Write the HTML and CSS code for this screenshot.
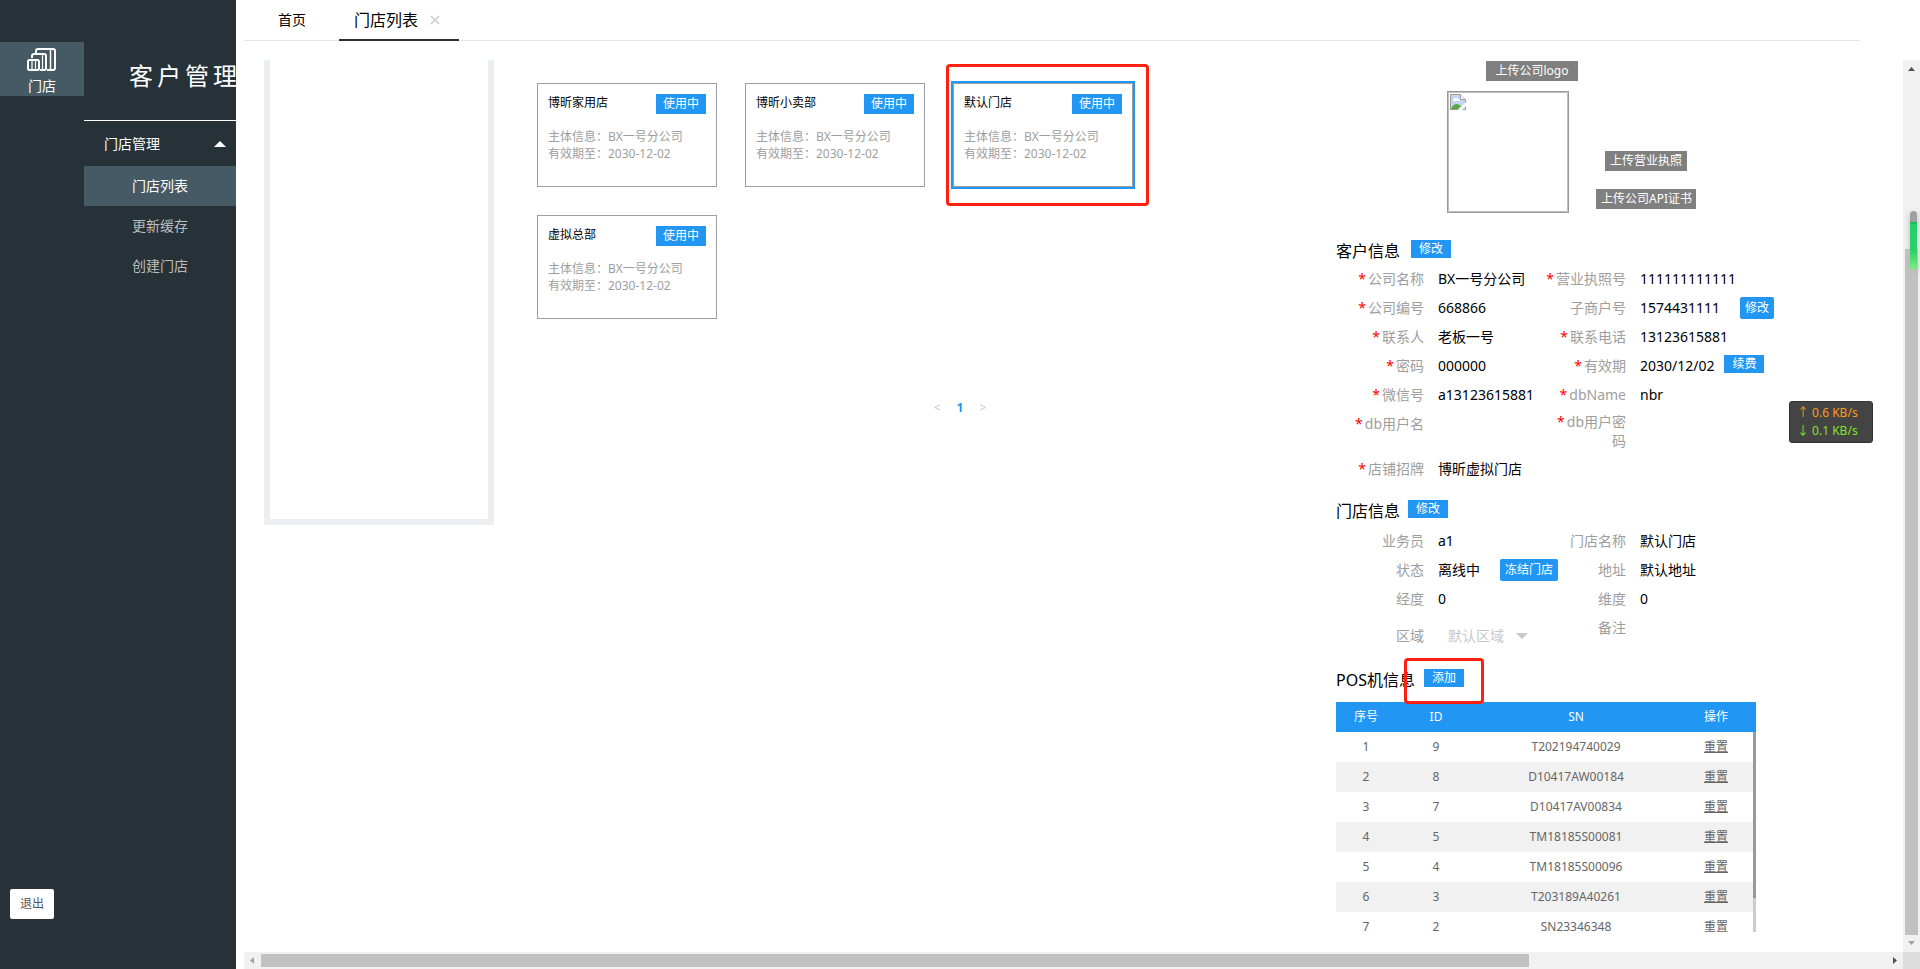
FILE: index.html
```html
<!DOCTYPE html>
<html lang="zh-CN">
<head>
<meta charset="utf-8">
<title>客户管理</title>
<link rel="stylesheet" href="styles.css">
</head>
<body>
<div class="app">
  <nav class="rail">
    <a class="rail-item" href="#">
      <svg width="30" height="24" viewBox="0 0 30 24" fill="none" stroke="#fff" stroke-width="2">
        <rect x="1" y="13" width="11" height="10" rx="1.5"/>
        <path d="M5 13v10M8.500 13v10" stroke-width="1.200"/>
        <path d="M5 11V9q0-2 2-2h10q2 0 2 2v12q0 2-2 2h-4"/>
        <path d="M15.500 8v14" stroke-width="1.200"/>
        <path d="M9 6V4q0-2 2-2h15q2 0 2 2v17q0 2-2 2h-6"/>
        <path d="M23.500 3v19" stroke-width="1.500"/>
      </svg>
      <span>门店</span>
    </a>
    <button class="logout" type="button">退出</button>
  </nav>
  <aside class="menu">
    <h1 class="menu-title">客户管理</h1>
    <button class="menu-group" type="button"><span>门店管理</span>
      <svg width="12" height="6" viewBox="0 0 12 6"><path d="M0 6L6 0L12 6Z" fill="#fff"/></svg>
    </button>
    <a class="menu-item active" href="#">门店列表</a>
    <a class="menu-item" href="#">更新缓存</a>
    <a class="menu-item" href="#">创建门店</a>
  </aside>
  <main class="main">
    <div class="tabs">
      <a class="tab" href="#">首页</a>
      <a class="tab current" href="#">门店列表
        <svg width="10" height="10" viewBox="0 0 10 10" stroke="#c8c8c8" stroke-width="1.400"><path d="M1 1L9 9M9 1L1 9"/></svg>
      </a>
    </div>
    <div class="view">
      <div class="content">
        <div class="tree"></div>
        <section class="stores">
          <div class="cards">
            <article class="card"><div class="card-head"><h2>博昕家用店</h2><span class="status">使用中</span></div><p>主体信息：BX一号分公司</p><p>有效期至：2030-12-02</p></article>
            <article class="card"><div class="card-head"><h2>博昕小卖部</h2><span class="status">使用中</span></div><p>主体信息：BX一号分公司</p><p>有效期至：2030-12-02</p></article>
            <article class="card selected"><div class="card-head"><h2>默认门店</h2><span class="status">使用中</span></div><p>主体信息：BX一号分公司</p><p>有效期至：2030-12-02</p><i class="mark mark-card"></i></article>
            <article class="card"><div class="card-head"><h2>虚拟总部</h2><span class="status">使用中</span></div><p>主体信息：BX一号分公司</p><p>有效期至：2030-12-02</p></article>
          </div>
          <div class="pager"><button type="button">&lt;</button><button type="button" class="on">1</button><button type="button">&gt;</button></div>
        </section>
        <section class="detail">
          <div class="uploads">
            <div class="logo-col">
              <button class="upload" type="button">上传公司logo</button>
              <div class="logo-box">
                <svg width="16" height="16" viewBox="0 0 16 16">
                  <path d="M.5.500h10l5 5v10H.5z" fill="#c3d5f5" stroke="#9a9a9a"/>
                  <path d="M3 6q0-2 2-2q2-1 3 1q2 0 2 2H3z" fill="#fff"/>
                  <path d="M1 15q4-8 10-3l-3 3z" fill="#57ab38"/>
                  <path d="M10.500.500v5h5" fill="#fff" stroke="#9a9a9a"/>
                  <path d="M8 16L16 8v4l-4 4z" fill="#fff"/>
                </svg>
              </div>
            </div>
            <div class="file-col">
              <button class="upload" type="button">上传营业执照</button>
              <button class="upload" type="button">上传公司API证书</button>
            </div>
          </div>

          <div class="section-head"><h3>客户信息</h3><button class="btn" type="button">修改</button></div>
          <dl class="fields">
            <dt class="req">公司名称</dt><dd>BX一号分公司</dd><dt class="req">营业执照号</dt><dd>111111111111</dd>
            <dt class="req">公司编号</dt><dd>668866</dd><dt>子商户号</dt><dd>1574431111<button class="btn tall" type="button">修改</button></dd>
            <dt class="req">联系人</dt><dd>老板一号</dd><dt class="req">联系电话</dt><dd>13123615881</dd>
            <dt class="req">密码</dt><dd>000000</dd><dt class="req">有效期</dt><dd>2030/12/02<button class="btn near" type="button">续费</button></dd>
            <dt class="req">微信号</dt><dd>a13123615881</dd><dt class="req">dbName</dt><dd>nbr</dd>
            <dt class="req">db用户名</dt><dd></dd><dt class="req wrap">db用户密码</dt><dd></dd>
            <dt class="req">店铺招牌</dt><dd>博昕虚拟门店</dd>
          </dl>

          <div class="section-head second"><h3>门店信息</h3><button class="btn" type="button">修改</button></div>
          <dl class="fields">
            <dt>业务员</dt><dd>a1</dd><dt>门店名称</dt><dd>默认门店</dd>
            <dt>状态</dt><dd>离线中<button class="btn tall" type="button">冻结门店</button></dd><dt>地址</dt><dd>默认地址</dd>
            <dt>经度</dt><dd>0</dd><dt>维度</dt><dd>0</dd>
            <dt class="area"><label for="area">区域</label></dt>
            <dd class="area"><select id="area" disabled><option>默认区域</option></select><svg width="12" height="6" viewBox="0 0 12 6"><path d="M0 0H12L6 6Z" fill="#c8c8c8"/></svg></dd>
            <dt>备注</dt><dd></dd>
          </dl>

          <div class="section-head third"><h3>POS机信息</h3><span class="marked"><button class="btn" type="button">添加</button><i class="mark mark-add"></i></span></div>
          <div class="pos">
            <table>
              <colgroup><col class="c-no"><col class="c-id"><col class="c-sn"><col class="c-op"></colgroup>
              <thead><tr><th>序号</th><th>ID</th><th>SN</th><th>操作</th></tr></thead>
              <tbody>
                <tr><td>1</td><td>9</td><td>T202194740029</td><td><a href="#">重置</a></td></tr>
                <tr><td>2</td><td>8</td><td>D10417AW00184</td><td><a href="#">重置</a></td></tr>
                <tr><td>3</td><td>7</td><td>D10417AV00834</td><td><a href="#">重置</a></td></tr>
                <tr><td>4</td><td>5</td><td>TM18185S00081</td><td><a href="#">重置</a></td></tr>
                <tr><td>5</td><td>4</td><td>TM18185S00096</td><td><a href="#">重置</a></td></tr>
                <tr><td>6</td><td>3</td><td>T203189A40261</td><td><a href="#">重置</a></td></tr>
                <tr><td>7</td><td>2</td><td>SN23346348</td><td><a href="#">重置</a></td></tr>
              </tbody>
            </table>
            <div class="pos-bar"><i></i></div>
          </div>
        </section>
      </div>
      <div class="vbar">
        <svg width="17" height="17"><path d="M5 11L8.500 7L12 11Z" fill="#505050"/></svg>
        <div class="vtrack"><i></i></div>
        <svg width="17" height="17"><path d="M5 6L12 6L8.500 10Z" fill="#a3a3a3"/></svg>
      </div>
      <div class="hbar">
        <svg width="17" height="17"><path d="M10 5V12L6 8.500Z" fill="#a3a3a3"/></svg>
        <div class="htrack"><i></i></div>
        <svg width="17" height="17"><path d="M7 5V12L11 8.500Z" fill="#505050"/></svg>
      </div>
      <div class="corner"></div>
    </div>
  </main>
  <div class="net"><span class="up">↑ 0.6 KB/s</span><span class="down">↓ 0.1 KB/s</span></div>
  <div class="gauge"></div>
</div>
</body>
</html>
```

FILE: styles.css
```css
* { box-sizing: border-box; }
body, h1, h2, h3, p, dl, dd { margin: 0; font-weight: 400; }
body {
  font: 14px/20px "Noto Sans", "Noto Sans CJK SC", sans-serif;
  color: #000;
  background: #fff;
}
button, select { font: inherit; border: 0; padding: 0; margin: 0; background: none; }
a { color: inherit; text-decoration: none; }
svg { display: block; flex: none; }

.app { position: relative; display: flex; height: 100vh; overflow: hidden; }

.rail {
  flex: none;
  width: 84px;
  padding: 42px 0 50px;
  display: flex;
  flex-direction: column;
  background: #263238;
  color: #fff;
}
.rail-item {
  height: 54px;
  padding-top: 5px;
  display: flex;
  flex-direction: column;
  align-items: center;
  gap: 5px;
  background: #455a64;
}
.logout {
  width: 44px;
  height: 30px;
  margin: auto 0 0 10px;
  border-radius: 2px;
  background: #fff;
  color: #555;
  font-size: 12px;
}

.menu {
  flex: none;
  width: 152px;
  overflow: hidden;
  background: #263238;
  box-shadow: inset 2px 0 #2e2f33;
  color: #fff;
}
.menu-title {
  height: 121px;
  padding: 60px 0 0 45px;
  border-bottom: 1px solid #fff;
  font-size: 24px;
  line-height: 32px;
  letter-spacing: 4px;
  white-space: nowrap;
}
.menu-group {
  width: 100%;
  height: 45px;
  padding: 0 10px 0 20px;
  display: flex;
  align-items: center;
  justify-content: space-between;
  background: #263238;
  color: #fff;
}
.menu-item {
  display: block;
  height: 40px;
  line-height: 40px;
  text-align: center;
  color: #bdbdbd;
  background: #263238;
}
.menu-item.active { background: #455a64; color: #fff; }

.main { flex: 1; min-width: 0; padding-left: 8px; display: flex; flex-direction: column; }
.tabs {
  height: 41px;
  margin: 0 60px 19px 0;
  display: flex;
  border-bottom: 1px solid #e6e6e6;
}
.tab { height: 41px; padding: 0 33px 0 34px; line-height: 40px; }
.tab.current {
  width: 120px;
  padding: 0 0 0 15px;
  display: flex;
  align-items: center;
  gap: 12px;
  font-size: 16px;
  border-bottom: 2px solid #263238;
}

.view { flex: 1; min-height: 0; display: grid; grid-template: minmax(0, 1fr) 17px / minmax(0, 1fr) 17px; }
.content { overflow: hidden; padding-left: 20px; display: flex; align-items: flex-start; }
.tree { flex: none; width: 230px; height: 465px; border: 6px solid #eceff1; border-top: 0; }
.stores { flex: 1; min-width: 0; padding: 23px 0 0 43px; }
.cards { display: grid; grid-template-columns: repeat(3, 180px); gap: 28px; }
.card { position: relative; height: 104px; padding: 10px; border: 1px solid #9e9e9e; font-size: 12px; }
.card.selected { box-shadow: 0 0 0 2px #2196f3; }
.card-head { display: flex; justify-content: space-between; margin-bottom: 14px; }
.card h2 { font-size: 12px; line-height: 18px; }
.card p { line-height: 17px; color: #9e9e9e; white-space: nowrap; }
.status { width: 50px; height: 20px; background: #2196f3; color: #fff; text-align: center; }
.mark { position: absolute; z-index: 1; border: 3px solid #ff2010; border-radius: 4px; pointer-events: none; }
.mark-card { inset: -20px -17px -20px -8px; }
.mark-add { inset: -11px -20px -17px -20px; }
.pager { display: flex; justify-content: center; gap: 16px; padding: 79px 0 0 47px; font-size: 12px; }
.pager button { color: #c8c8c8; }
.pager .on { color: #2196f3; font-weight: 700; }

.detail { flex: none; width: 567px; }
.uploads { display: flex; padding: 1px 0 0 111px; height: 180px; }
.logo-col { display: flex; flex-direction: column; align-items: center; gap: 10px; width: 122px; }
.logo-col .upload { width: 92px; align-self: flex-end; margin-right: -9px; }
.upload { height: 20px; padding: 0 5px; background: #808080; color: #fff; font-size: 12px; line-height: 20px; white-space: nowrap; }
.logo-box { width: 122px; height: 122px; padding: 2px; border: 1px solid #999; box-shadow: inset 0 0 0 1px #c0c0c0; }
.file-col { display: flex; flex-direction: column; align-items: center; gap: 18px; padding: 90px 0 0 27px; }
.file-col .upload:first-child { width: 82px; }
.file-col .upload:last-child { width: 100px; }

.section-head { display: flex; align-items: flex-start; gap: 11px; height: 24px; }
.section-head h3 { font-size: 16px; line-height: 22px; }
.section-head.second { margin-top: 17px; gap: 8px; height: 26px; }
.section-head.third { margin-top: 19px; gap: 9px; height: 33px; }
.marked { position: relative; }
.btn { display: block; width: 40px; height: 18px; background: #2196f3; color: #fff; font-size: 12px; line-height: 18px; white-space: nowrap; }
.btn.tall { width: auto; height: 22px; padding: 0 5px; border-radius: 2px; line-height: 22px; margin-left: 20px; }
.btn.near { margin-left: 10px; margin-bottom: 4px; }

.fields { display: grid; grid-template-columns: 88px 120px 82px 1fr; line-height: 29px; }
.fields dt { text-align: right; color: #9e9e9e; }
.fields dd { padding-left: 14px; display: flex; align-items: center; height: 29px; white-space: nowrap; }
.req::before { content: "*"; color: #f00; margin-right: 2px; }
.fields .wrap { padding: 3px 0 4px; line-height: 19px; word-break: break-all; }
.fields .area { padding-top: 8px; height: 37px; }
.fields dd.area { padding-left: 24px; gap: 12px; }
.area select { appearance: none; color: #c8c8c8; opacity: 1; }

.pos { position: relative; width: 420px; height: 230px; overflow: hidden; font-size: 12px; }
.pos table { width: 100%; table-layout: fixed; border-collapse: collapse; text-align: center; color: #666; }
.c-no { width: 60px; }
.c-id { width: 80px; }
.c-sn { width: 200px; }
.pos th, .pos td { height: 30px; padding: 0; font-weight: 400; }
.pos th { background: #2196f3; color: #fff; }
.pos tbody tr:nth-child(even) { background: #f1f1f1; }
.pos a { text-decoration: underline; }
.pos-bar { position: absolute; top: 30px; right: 0; bottom: 0; width: 3px; background: #ccc; }
.pos-bar i { display: block; height: 83%; background: #999; }

.vbar { display: flex; flex-direction: column; background: #f1f1f1; }
.vtrack { flex: 1; padding: 0 2px; display: flex; flex-direction: column; justify-content: flex-end; }
.vtrack i { height: 80%; background: #c1c1c1; }
.hbar { display: flex; background: #f1f1f1; }
.htrack { flex: 1; padding: 2px 0; display: flex; }
.htrack i { width: 78%; background: #c1c1c1; }
.corner { background: #dcdcdc; }

.net {
  position: absolute;
  right: 47px;
  top: 401px;
  width: 84px;
  height: 42px;
  padding: 2px 7px;
  display: flex;
  flex-direction: column;
  border: 1px solid #333;
  border-radius: 3px;
  background: #444;
  font-size: 12px;
  line-height: 18px;
  white-space: nowrap;
}
.up { color: #ff9a1f; }
.down { color: #84e22c; }
.gauge {
  position: absolute;
  right: 3px;
  top: 211px;
  width: 7px;
  height: 59px;
  border-radius: 4px;
  background: linear-gradient(#a0a0a0 11px, #12b355 11px, #22cf6b 14px, #2fd06a 40px, #7ff080);
  box-shadow: 0 2px 6px #bbb;
}
```
